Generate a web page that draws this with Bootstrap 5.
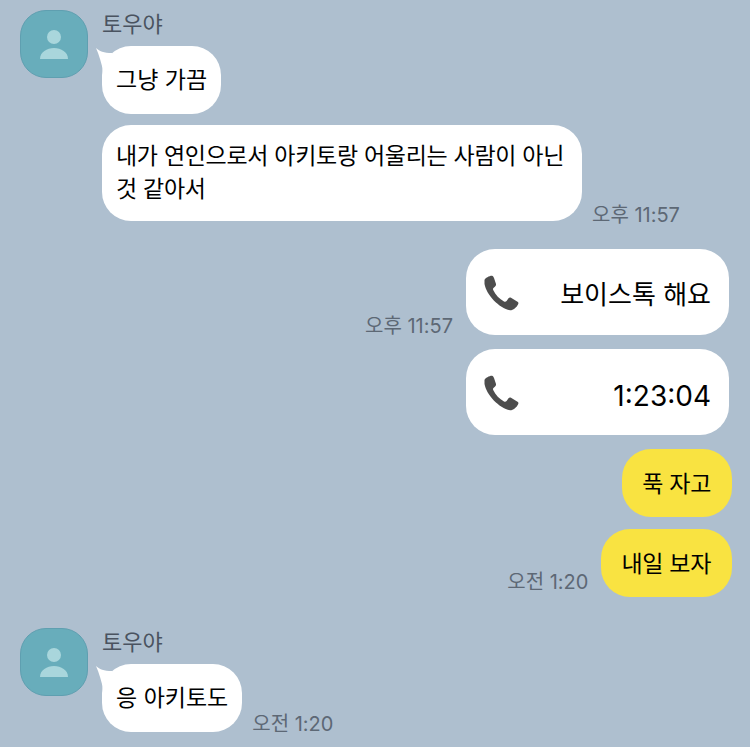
<!DOCTYPE html>
<html lang="ko">

<head>
    <meta charset="UTF-8">
    <meta name="viewport" content="width=device-width, initial-scale=1.0">
    <title>토우야</title>
    <link href="https://cdn.jsdelivr.net/npm/bootstrap@5.3.0/dist/css/bootstrap.min.css" rel="stylesheet">
    <style>
        html, body {
            height: 747px;
            overflow: hidden;
        }
        body {
            background: #aebfcf;
            font-family: Inter, "Noto Sans CJK KR", sans-serif;
            color: #000;
        }
        .chat-wrap {
            padding: 10px 21px 0 20px;
        }
        .peer-group { gap: 14px; }
        .peer-pic {
            width: 68px;
            height: 68px;
            flex: none;
            background: #68adbb;
            border: 1px solid #5f9fb0;
            border-radius: 26px;
        }
        .peer-name {
            font-size: 22px;
            line-height: 28px;
            color: #4a5360;
            margin-bottom: 8px;
        }
        .bubble {
            position: relative;
            background: #fff;
            border-radius: 29px;
            padding: 17px 14px;
            font-size: 23px;
            line-height: 34px;
        }
        .bubble-tail {
            position: absolute;
            left: -6px;
            top: 2px;
        }
        .bubble-long {
            width: 480px;
            padding: 15px 14px;
            line-height: 33px;
            letter-spacing: -.3px;
            word-break: keep-all;
        }
        .bubble-call {
            width: 263px;
            height: 86px;
            padding: 2px 18px 0 17px;
            font-size: 26px;
        }
        .call-label { margin-top: 4px; }
        .call-digits { font-size: 28px; margin-top: 6px; }
        .bubble-me {
            background: #f9e341;
            padding: 18px 21px 16px 20px;
            letter-spacing: -.3px;
        }
        .sent-time {
            font-size: 20px;
            line-height: 22px;
            color: #5d6875;
            margin: 0 10px -5px;
            white-space: nowrap;
        }
        .time-left { margin: 0 13px -2px 0; }
        .time-raised { margin: 0 13px 4px 0; }
        .time-end { margin-bottom: -3px; }
        .gap-a { margin-top: 11px; }
        .gap-b { margin-top: 28px; }
        .gap-c { margin-top: 14px; }
        .gap-e { margin-top: 12px; }
        .gap-d { margin-top: 31px; }
        .shift-me { margin-right: -3px; }
    </style>
</head>

<body>
    <div class="chat-wrap">
        <!-- peer block 1 -->
        <div class="d-flex peer-group">
            <div class="peer-pic d-flex align-items-center justify-content-center">
                <svg width="36" height="36" viewBox="0 0 36 36" fill="#a9d6dc">
                    <circle cx="18" cy="11" r="7" />
                    <path d="M4 33c0-7 7-11 14-11s14 4 14 11z" />
                </svg>
            </div>
            <div>
                <div class="peer-name">토우야</div>
                <div class="d-flex">
                    <div class="bubble">
                        <svg class="bubble-tail" width="20" height="24" viewBox="0 0 20 24" fill="#fff">
                            <path d="M0 0C3 3 8 5 16 5V24H7C6 16 3 7 0 0z" />
                        </svg>
                        그냥 가끔
                    </div>
                </div>
                <div class="d-flex align-items-end gap-a">
                    <div class="bubble bubble-long">내가 연인으로서 아키토랑 어울리는 사람이 아닌 것 같아서</div>
                    <div class="sent-time">오후 11:57</div>
                </div>
            </div>
        </div>

        <!-- my messages -->
        <div class="d-flex justify-content-end align-items-end gap-b">
            <div class="sent-time time-left">오후 11:57</div>
            <div class="bubble bubble-call d-flex align-items-center justify-content-between">
                <svg width="36" height="36" viewBox="0 0 36 36" fill="#4d4d4d">
                    <path d="M1.500 5C2 3 7 .5 9 .8 10 1 10.500 2 11 3L13 9C13.300 10.500 12.500 11.500 11 12.500 10 13 9.800 14 10.200 15 12.500 20 16.500 24 21 26.500 22 27 23 26.700 23.600 26L25.500 23.300C26.200 22.500 27 22.300 28 22.800L34.500 26.800C35.500 27.400 35.700 28.300 35 29.500 33.500 32.500 30 35.500 27 35.300 16 33 3.500 20 1.500 9z" />
                </svg>
                <span class="call-label">보이스톡 해요</span>
            </div>
        </div>
        <div class="d-flex justify-content-end gap-c">
            <div class="bubble bubble-call d-flex align-items-center justify-content-between">
                <svg width="36" height="36" viewBox="0 0 36 36" fill="#4d4d4d">
                    <path d="M1.500 5C2 3 7 .5 9 .8 10 1 10.500 2 11 3L13 9C13.300 10.500 12.500 11.500 11 12.500 10 13 9.800 14 10.200 15 12.500 20 16.500 24 21 26.500 22 27 23 26.700 23.600 26L25.500 23.300C26.200 22.500 27 22.300 28 22.800L34.500 26.800C35.500 27.400 35.700 28.300 35 29.500 33.500 32.500 30 35.500 27 35.300 16 33 3.500 20 1.500 9z" />
                </svg>
                <span class="call-digits">1:23:04</span>
            </div>
        </div>
        <div class="d-flex justify-content-end gap-c shift-me">
            <div class="bubble bubble-me">푹 자고</div>
        </div>
        <div class="d-flex justify-content-end align-items-end shift-me gap-e">
            <div class="sent-time time-raised">오전 1:20</div>
            <div class="bubble bubble-me">내일 보자</div>
        </div>

        <!-- peer block 2 -->
        <div class="d-flex peer-group gap-d">
            <div class="peer-pic d-flex align-items-center justify-content-center">
                <svg width="36" height="36" viewBox="0 0 36 36" fill="#a9d6dc">
                    <circle cx="18" cy="11" r="7" />
                    <path d="M4 33c0-7 7-11 14-11s14 4 14 11z" />
                </svg>
            </div>
            <div>
                <div class="peer-name">토우야</div>
                <div class="d-flex align-items-end">
                    <div class="bubble">
                        <svg class="bubble-tail" width="20" height="24" viewBox="0 0 20 24" fill="#fff">
                            <path d="M0 0C3 3 8 5 16 5V24H7C6 16 3 7 0 0z" />
                        </svg>
                        응 아키토도
                    </div>
                    <div class="sent-time time-end">오전 1:20</div>
                </div>
            </div>
        </div>
    </div>

    <script src="https://cdn.jsdelivr.net/npm/bootstrap@5.3.0/dist/js/bootstrap.bundle.min.js"></script>
</body>

</html>
